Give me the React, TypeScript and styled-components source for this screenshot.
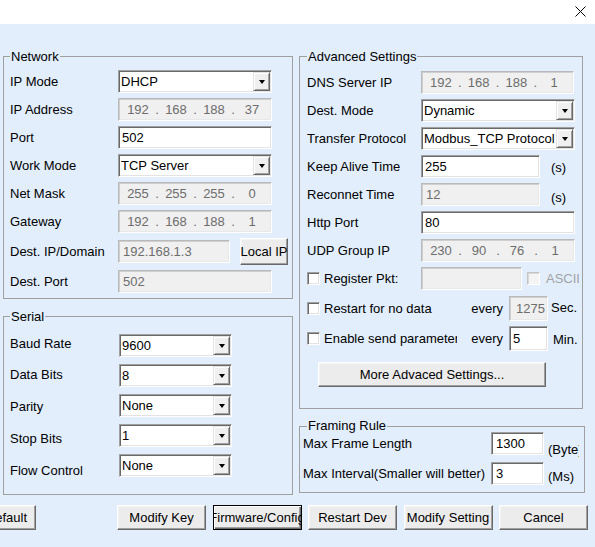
import React from 'react';
import styled, { createGlobalStyle, css } from 'styled-components';

const GlobalStyle = createGlobalStyle`
  html, body {
    margin: 0;
    padding: 0;
    background: #e2eefc;
    overflow: hidden;
  }
  body {
    font-family: 'Liberation Sans', Arial, sans-serif;
    font-size: 13px;
    color: #000;
  }
`;

const sunken = css`
  border: 1px solid;
  border-color: #a0a0a0 #ffffff #ffffff #a0a0a0;
  box-shadow: inset 1px 1px 0 #696969, inset -1px -1px 0 #e3e3e3;
`;

const sunkenOff = css`
  border: 1px solid;
  border-color: #b9b9b9 #ffffff #ffffff #b9b9b9;
  box-shadow: inset 1px 1px 0 #cfcfcf, inset -1px -1px 0 #e8e8e8;
`;

const Window = styled.div`
  width: 595px;
  height: 547px;
  background: #e2eefc;
  overflow: hidden;
`;

const TitleBar = styled.div`
  height: 24px;
  box-sizing: border-box;
  background: #fff;
  display: flex;
  justify-content: flex-end;
  align-items: flex-start;
  padding: 6px 9px 0 0;
`;

const Body = styled.div`
  padding: 25px 0 0 3px;
`;

const Columns = styled.div`
  display: flex;
  align-items: flex-start;
  gap: 6px;
`;

const Column = styled.div`
  display: flex;
  flex-direction: column;
`;

const GroupBox = styled.fieldset<{ $w: number; $pad: string; $mt?: number }>`
  box-sizing: border-box;
  width: ${p => p.$w}px;
  min-width: 0;
  margin: ${p => p.$mt ?? 0}px 0 0;
  padding: ${p => p.$pad};
  border: 1px solid #a0a0a0;
`;

const Legend = styled.legend<{ $lh?: number; $indent?: number }>`
  padding: 0 1px;
  margin-left: ${p => p.$indent ?? 0}px;
  line-height: ${p => p.$lh ?? 15}px;
`;

const Stack = styled.div<{ $gap: number }>`
  display: flex;
  flex-direction: column;
  gap: ${p => p.$gap}px;
`;

const Row = styled.div<{ $h?: number; $mt?: number }>`
  display: flex;
  align-items: center;
  height: ${p => p.$h ?? 23}px;
  margin-top: ${p => p.$mt ?? 0}px;
`;

const Label = styled.span<{ $w: number }>`
  width: ${p => p.$w}px;
  flex: none;
  white-space: nowrap;
  line-height: 15px;
`;

const Field = styled.div<{ $w: number; $h?: number; $off?: boolean; $pl?: number }>`
  ${p => (p.$off ? sunkenOff : sunken)};
  box-sizing: border-box;
  flex: none;
  width: ${p => p.$w}px;
  height: ${p => p.$h ?? 23}px;
  padding: 0 0 0 ${p => p.$pl ?? 3}px;
  display: flex;
  align-items: center;
  background: ${p => (p.$off ? '#f0f0f0' : '#fff')};
  color: ${p => (p.$off ? '#6d6d6d' : '#000')};
  white-space: nowrap;
  overflow: hidden;
`;

const IpGrid = styled.div`
  display: grid;
  grid-template-columns: 1fr 0 1fr 0 1fr 0 1fr;
  width: 100%;
  align-items: center;
`;

const Octet = styled.span`
  text-align: center;
`;

const Dot = styled.span`
  display: flex;
  justify-content: center;
  width: 0;
`;

const ComboBox = styled.div<{ $w: number }>`
  ${sunken};
  box-sizing: border-box;
  flex: none;
  width: ${p => p.$w}px;
  height: 23px;
  padding: 1px;
  background: #fff;
  display: flex;
`;

const ComboText = styled.span`
  flex: 1;
  display: flex;
  align-items: center;
  padding-left: 1px;
  white-space: nowrap;
  overflow: hidden;
`;

const ComboButton = styled.span`
  box-sizing: border-box;
  flex: none;
  width: 17px;
  background: #f0f0f0;
  border: 1px solid;
  border-color: #e3e3e3 #696969 #696969 #e3e3e3;
  box-shadow: inset 1px 1px 0 #fff, inset -1px -1px 0 #a0a0a0;
  display: flex;
  align-items: center;
  justify-content: center;
`;

const Arrow = styled.span`
  width: 0;
  height: 0;
  border-left: 3.5px solid transparent;
  border-right: 3.5px solid transparent;
  border-top: 4px solid #000;
`;

const Unit = styled.span<{ $ml: number; $top: number; $w?: number }>`
  align-self: flex-start;
  margin: ${p => p.$top}px 0 0 ${p => p.$ml}px;
  line-height: 15px;
  white-space: nowrap;
  overflow: hidden;
  ${p => p.$w && `width: ${p.$w}px;`}
`;

const CheckItem = styled.label<{ $w: number; $off?: boolean }>`
  display: flex;
  align-items: center;
  gap: 4px;
  flex: none;
  width: ${p => p.$w}px;
  overflow: hidden;
  white-space: nowrap;
  line-height: 15px;
  color: ${p => (p.$off ? '#a3a3a3' : '#000')};
`;

const CheckBox = styled.span<{ $off?: boolean }>`
  box-sizing: border-box;
  flex: none;
  width: 13px;
  height: 13px;
  background: ${p => (p.$off ? '#f4f4f4' : '#fff')};
  border: 1px solid;
  border-color: ${p => (p.$off ? '#c4c4c4 #fff #fff #c4c4c4' : '#a0a0a0 #fff #fff #a0a0a0')};
  box-shadow: ${p =>
    p.$off ? 'inset 1px 1px 0 #d8d8d8' : 'inset 1px 1px 0 #696969, inset -1px -1px 0 #e3e3e3'};
`;

const Every = styled.span`
  flex: none;
  width: 52px;
  padding-right: 6px;
  box-sizing: border-box;
  text-align: right;
  line-height: 15px;
`;

const SerialBody = styled.div`
  display: flex;
`;

const LabelColumn = styled.div`
  display: flex;
  flex-direction: column;
  width: 109px;
  padding-top: 1.5px;
  gap: 16.75px;
  line-height: 15px;
`;

const Button = styled.button<{ $w: number; $h?: number; $focus?: boolean; $ml?: number; $mr?: number }>`
  box-sizing: border-box;
  flex: none;
  width: ${p => p.$w}px;
  height: ${p => p.$h ?? 25}px;
  margin: 0 ${p => p.$mr ?? 0}px 0 ${p => p.$ml ?? 0}px;
  padding: 0 2px;
  font: 13px 'Liberation Sans', Arial, sans-serif;
  color: #000;
  background: #ececec;
  display: flex;
  align-items: center;
  justify-content: center;
  white-space: nowrap;
  overflow: hidden;
  ${p =>
    p.$focus
      ? css`
          border: 1px solid #000;
          box-shadow: inset 1px 1px 0 #fff, inset -1px -1px 0 #696969, inset -2px -2px 0 #a0a0a0;
        `
      : css`
          border: 1px solid;
          border-color: #fff #696969 #696969 #fff;
          box-shadow: inset -1px -1px 0 #a0a0a0, inset 1px 1px 0 #f4f4f4;
        `}
`;

const ButtonBar = styled.div`
  display: flex;
  align-items: center;
  gap: 6.5px;
  margin: 10px 0 0 -26px;
`;

const CloseIcon = () => (
  <svg width="11" height="11" viewBox="0 0 11 11">
    <path d="M0.5 0.5L10.5 10.5M10.5 0.5L0.5 10.5" stroke="#000" strokeWidth="1" fill="none" />
  </svg>
);

const Combo = ({ w, value }: { w: number; value: string }) => (
  <ComboBox $w={w}>
    <ComboText>{value}</ComboText>
    <ComboButton>
      <Arrow />
    </ComboButton>
  </ComboBox>
);

const IpField = ({ w, parts }: { w: number; parts: string[] }) => (
  <Field $w={w} $off $pl={0}>
    <IpGrid>
      {parts.map((part, i) => (
        <React.Fragment key={i}>
          <Octet>{part}</Octet>
          {i < parts.length - 1 && <Dot>.</Dot>}
        </React.Fragment>
      ))}
    </IpGrid>
  </Field>
);

const serialRows = [
  ['Baud Rate', '9600'],
  ['Data Bits', '8'],
  ['Parity', 'None'],
  ['Stop Bits', '1'],
  ['Flow Control', 'None'],
];

export default function App() {
  return (
    <Window>
      <GlobalStyle />
      <TitleBar>
        <CloseIcon />
      </TitleBar>
      <Body>
        <Columns>
          <Column>
            <GroupBox $w={290} $pad="6px 0 5px 6px">
              <Legend>Network</Legend>
              <Stack $gap={5}>
                <Row>
                  <Label $w={108}>IP Mode</Label>
                  <Combo w={154} value="DHCP" />
                </Row>
                <Row>
                  <Label $w={108}>IP Address</Label>
                  <IpField w={154} parts={['192', '168', '188', '37']} />
                </Row>
                <Row>
                  <Label $w={108}>Port</Label>
                  <Field $w={154}>502</Field>
                </Row>
                <Row>
                  <Label $w={108}>Work Mode</Label>
                  <Combo w={154} value="TCP Server" />
                </Row>
                <Row>
                  <Label $w={108}>Net Mask</Label>
                  <IpField w={154} parts={['255', '255', '255', '0']} />
                </Row>
                <Row>
                  <Label $w={108}>Gateway</Label>
                  <IpField w={154} parts={['192', '168', '188', '1']} />
                </Row>
                <Row $h={27}>
                  <Label $w={108}>Dest. IP/Domain</Label>
                  <Field $w={112} $off $pl={4}>192.168.1.3</Field>
                  <Button $w={48} $h={27} $ml={10}>Local IP</Button>
                </Row>
                <Row>
                  <Label $w={108}>Dest. Port</Label>
                  <Field $w={154} $off $pl={4}>502</Field>
                </Row>
              </Stack>
            </GroupBox>

            <GroupBox $w={290} $pad="10px 0 16px 6px" $mt={10}>
              <Legend>Serial</Legend>
              <SerialBody>
                <LabelColumn>
                  {serialRows.map(([label]) => (
                    <span key={label}>{label}</span>
                  ))}
                </LabelColumn>
                <Stack $gap={7}>
                  {serialRows.map(([label, value]) => (
                    <Combo key={label} w={113} value={value} />
                  ))}
                </Stack>
              </SerialBody>
            </GroupBox>
          </Column>

          <Column>
            <GroupBox $w={284} $pad="7px 0 21px 7px">
              <Legend>Advanced Settings</Legend>
              <Stack $gap={5}>
                <Row>
                  <Label $w={114}>DNS Server IP</Label>
                  <IpField w={153} parts={['192', '168', '188', '1']} />
                </Row>
                <Row>
                  <Label $w={114}>Dest. Mode</Label>
                  <Combo w={154} value="Dynamic" />
                </Row>
                <Row>
                  <Label $w={114}>Transfer Protocol</Label>
                  <Combo w={154} value="Modbus_TCP Protocol" />
                </Row>
                <Row>
                  <Label $w={114}>Keep Alive Time</Label>
                  <Field $w={119}>255</Field>
                  <Unit $ml={11} $top={5}>(s)</Unit>
                </Row>
                <Row>
                  <Label $w={114}>Reconnet Time</Label>
                  <Field $w={119} $off $pl={4}>12</Field>
                  <Unit $ml={11} $top={7}>(s)</Unit>
                </Row>
                <Row>
                  <Label $w={114}>Http Port</Label>
                  <Field $w={154}>80</Field>
                </Row>
                <Row>
                  <Label $w={114}>UDP Group IP</Label>
                  <IpField w={154} parts={['230', '90', '76', '1']} />
                </Row>
                <Row>
                  <CheckItem $w={114}>
                    <CheckBox />
                    Register Pkt:
                  </CheckItem>
                  <Field $w={101} $off />
                  <CheckItem $w={56} $off style={{ marginLeft: 5, gap: 6 }}>
                    <CheckBox $off />
                    ASCII
                  </CheckItem>
                </Row>
                <Row $h={25} $mt={1}>
                  <CheckItem $w={150}>
                    <CheckBox />
                    Restart for no data
                  </CheckItem>
                  <Every>every</Every>
                  <Field $w={39} $h={25} $off $pl={6}>1275</Field>
                  <Unit $ml={3} $top={4}>Sec.</Unit>
                </Row>
                <Row $h={25}>
                  <CheckItem $w={150}>
                    <CheckBox />
                    Enable send parameter
                  </CheckItem>
                  <Every>every</Every>
                  <Field $w={39} $h={25}>5</Field>
                  <Unit $ml={5} $top={6}>Min.</Unit>
                </Row>
                <Row $h={25} $mt={6}>
                  <Button $w={228} $ml={11}>More Advaced Settings...</Button>
                </Row>
              </Stack>
            </GroupBox>

            <GroupBox $w={286} $pad="0 0 7px 3px" $mt={11}>
              <Legend $lh={12} $indent={4}>Framing Rule</Legend>
              <Stack $gap={7}>
                <Row>
                  <Label $w={188}>Max Frame Length</Label>
                  <Field $w={53} $pl={4}>1300</Field>
                  <Unit $ml={4} $top={10} $w={31}>(Byte)</Unit>
                </Row>
                <Row>
                  <Label $w={188}>Max Interval(Smaller will better)</Label>
                  <Field $w={53} $pl={4}>3</Field>
                  <Unit $ml={4} $top={7}>(Ms)</Unit>
                </Row>
              </Stack>
            </GroupBox>
          </Column>
        </Columns>

        <ButtonBar>
          <Button $w={59} $mr={74.5}>Default</Button>
          <Button $w={89}>Modify Key</Button>
          <Button $w={89} $focus>Firmware/Config</Button>
          <Button $w={89}>Restart Dev</Button>
          <Button $w={89}>Modify Setting</Button>
          <Button $w={89}>Cancel</Button>
        </ButtonBar>
      </Body>
    </Window>
  );
}
